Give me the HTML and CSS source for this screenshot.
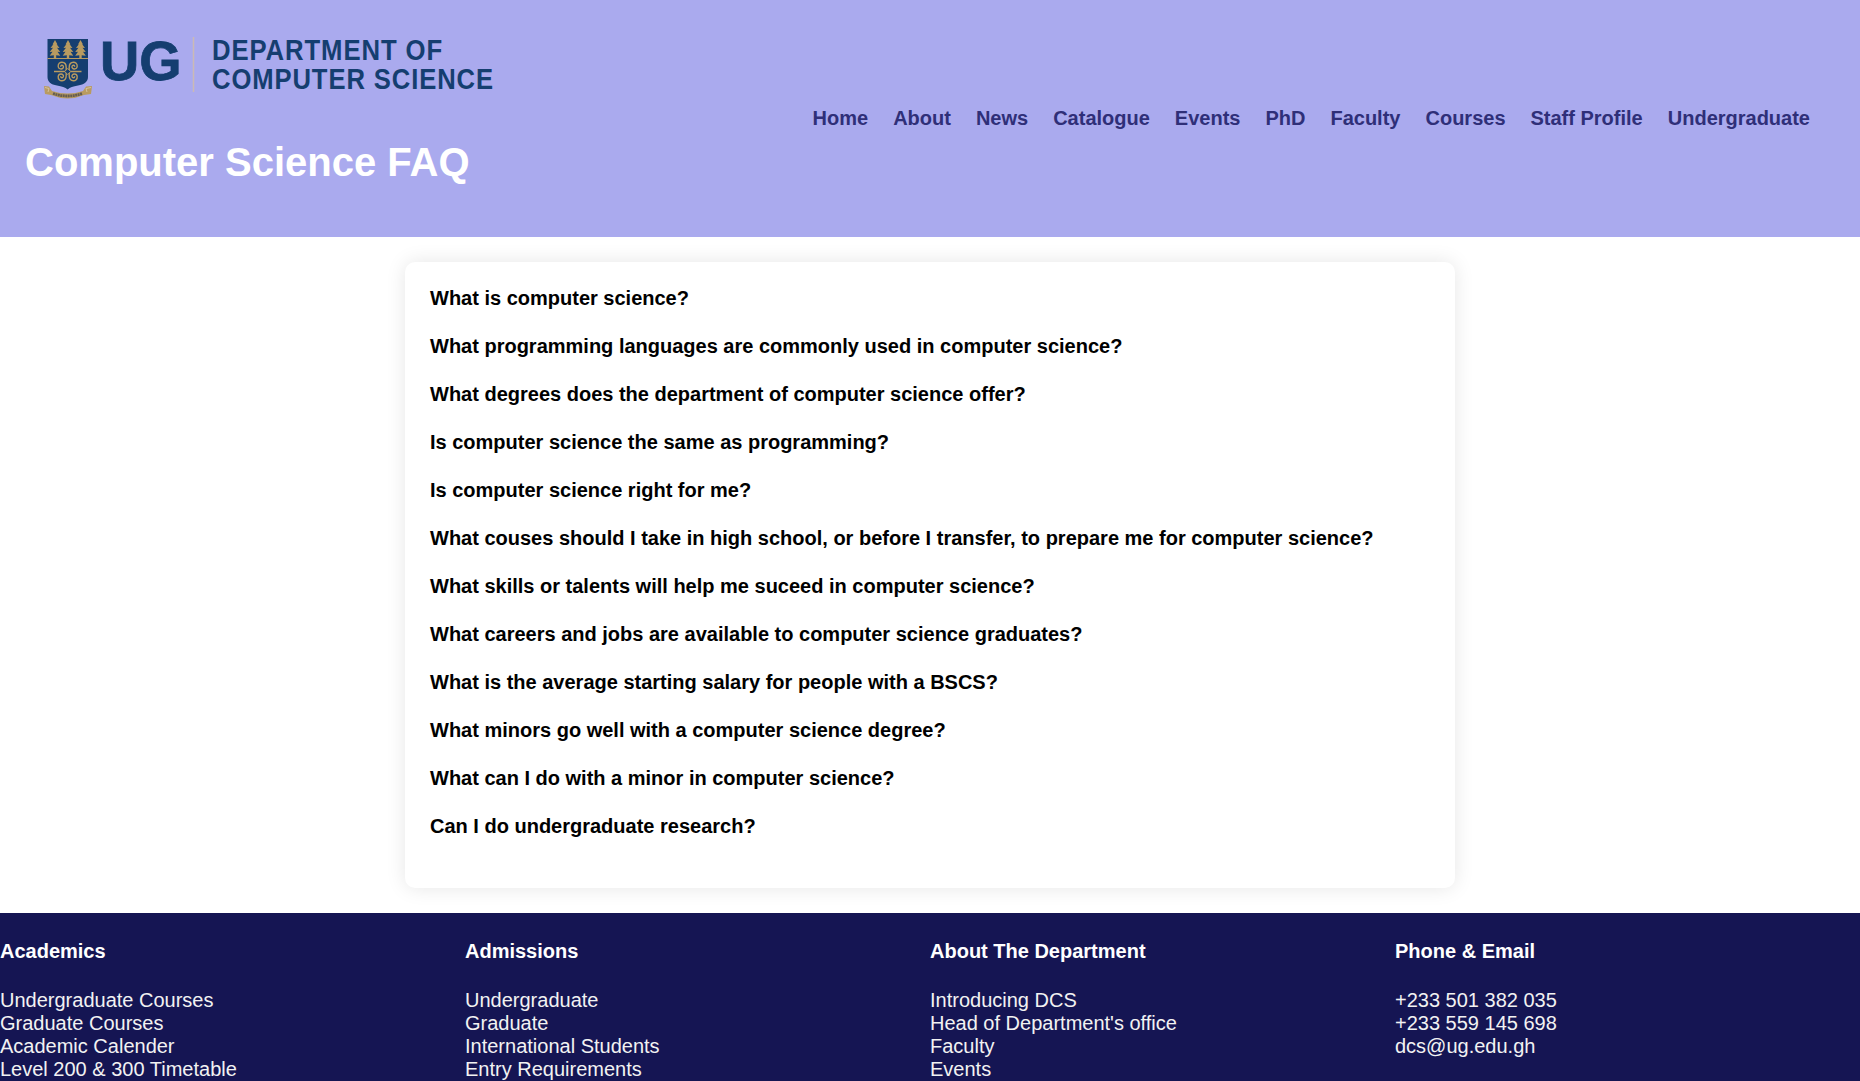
FILE: index.html
```html
<!DOCTYPE html>
<html lang="en">
<head>
<meta charset="utf-8">
<title>Computer Science FAQ</title>
<link rel="stylesheet" href="styles.css">
</head>
<body>
<header class="header">
  <div class="brand">
    <svg class="logo" width="520" height="80" viewBox="0 0 520 80" role="img" aria-label="UG Department of Computer Science">
      <defs>
        <g id="tree" fill="#b99b60">
          <path d="M0 0L2.500 4.500L1.600 4.300L4.500 8L2 7.800L5.300 12L2.500 11.700L5.300 15.700L1.200 15.200V18.500H-1.200V15.200L-5.300 15.700L-2.500 11.700L-5.300 12L-2 7.800L-4.500 8L-1.600 4.300L-2.500 4.500Z"/>
        </g>
        <g id="scroll" fill="none" stroke="#b99b60" stroke-width="1.400">
          <path d="M-1.500 -1V-4C-1.500 -11 -10 -10.500 -9.500 -5C-9 -1.500 -3.800 -2 -4.300 -5C-4.600 -7 -7.300 -6.500 -6.800 -4.700M-1.500 1V4C-1.500 11 -10 10.500 -9.500 5C-9 1.500 -3.800 2 -4.300 5C-4.600 7 -7.300 6.500 -6.800 4.700"/>
        </g>
      </defs>
      <path d="M47.500 12H88V50C88 55 84 57.500 78 58.500C73 59.500 70 60 67.700 62.500C65 60 62 59.500 57 58.500C51 57.500 47.500 55 47.500 50Z" fill="#153e70"/>
      <path d="M47.500 31.500H88" stroke="#b99b60" stroke-width="1"/>
      <use href="#tree" x="55" y="13"/><use href="#tree" x="68" y="13"/><use href="#tree" x="80.500" y="13"/>
      <use href="#scroll" x="67.700" y="44.500"/>
      <use href="#scroll" transform="translate(67.700 44.500) scale(-1 1)"/>
      <path d="M54 44.500H81.500" stroke="#b99b60" stroke-width="1.500"/>
      <path d="M67.700 41.500L70.700 44.500L67.700 47.500L64.700 44.500Z" fill="#153e70" stroke="#b99b60"/>
      <path d="M44 59L49 59.500L52 64Q67.700 69 83 64L86 59.500L92 59L91 67L84 68Q67.700 75 51 68L45 67Z" fill="#b99b60"/>
      <path d="M45 60.500L49 61.500L48 65M91 60.500L86 61.500L87 65" fill="none" stroke="#d5c29c"/>
      <path d="M53 66.500Q67.700 71.500 82.500 66.500" fill="none" stroke="#665d51" stroke-width="2.800" stroke-dasharray="2 .5"/>
      <text class="logo-ug" x="100" y="52.800" textLength="81.500" lengthAdjust="spacingAndGlyphs">UG</text>
      <path d="M193.500 10V65" stroke="#cbbab4" stroke-width="1.500"/>
      <text class="logo-name" x="212" y="32.800" textLength="231" lengthAdjust="spacingAndGlyphs">DEPARTMENT OF</text>
      <text class="logo-name" x="212" y="61.800" textLength="282" lengthAdjust="spacingAndGlyphs">COMPUTER SCIENCE</text>
    </svg>
    <h1 class="title">Computer Science FAQ</h1>
  </div>
  <nav class="nav">
    <a>Home</a><a>About</a><a>News</a><a>Catalogue</a><a>Events</a><a>PhD</a><a>Faculty</a><a>Courses</a><a>Staff Profile</a><a>Undergraduate</a>
  </nav>
</header>
<main class="faq">
  <p>What is computer science?</p>
  <p>What programming languages are commonly used in computer science?</p>
  <p>What degrees does the department of computer science offer?</p>
  <p>Is computer science the same as programming?</p>
  <p>Is computer science right for me?</p>
  <p>What couses should I take in high school, or before I transfer, to prepare me for computer science?</p>
  <p>What skills or talents will help me suceed in computer science?</p>
  <p>What careers and jobs are available to computer science graduates?</p>
  <p>What is the average starting salary for people with a BSCS?</p>
  <p>What minors go well with a computer science degree?</p>
  <p>What can I do with a minor in computer science?</p>
  <p>Can I do undergraduate research?</p>
</main>
<footer class="footer">
  <section><h4>Academics</h4><ul><li>Undergraduate Courses</li><li>Graduate Courses</li><li>Academic Calender</li><li>Level 200 &amp; 300 Timetable</li></ul></section>
  <section><h4>Admissions</h4><ul><li>Undergraduate</li><li>Graduate</li><li>International Students</li><li>Entry Requirements</li></ul></section>
  <section><h4>About The Department</h4><ul><li>Introducing DCS</li><li>Head of Department's office</li><li>Faculty</li><li>Events</li></ul></section>
  <section><h4>Phone &amp; Email</h4><ul><li>+233 501 382 035</li><li>+233 559 145 698</li><li>dcs@ug.edu.gh</li></ul></section>
</footer>
</body>
</html>
```
FILE: styles.css
```css
* { box-sizing: border-box; }
body {
  margin: 0;
  background: #fff;
  font: 20px/23px "Liberation Sans", Arial, sans-serif;
  color: #000;
}
.header {
  display: flex;
  justify-content: space-between;
  align-items: center;
  height: 237px;
  padding: 0 50px 0 0;
  background: #aaaaee;
}
.brand {
  align-self: flex-start;
  padding-top: 27px;
}
.logo {
  display: block;
  overflow: visible;
}
.logo-ug, .logo-name {
  font-weight: bold;
  fill: #153e70;
}
.logo-ug {
  font-size: 56px;
  stroke: #153e70;
  stroke-width: .8px;
}
.logo-name {
  font-size: 29px;
  letter-spacing: 1px;
}
.title {
  margin: 32px 0 0 25px;
  font-size: 40px;
  line-height: 46px;
  color: #fff;
}
.nav {
  display: flex;
  gap: 25px;
  font-weight: bold;
  color: #2f2f78;
}
.faq {
  width: 1050px;
  height: 626px;
  margin: 25px auto;
  padding: 25px;
  border-radius: 10px;
  background: #fff;
  box-shadow: 0 0 20px rgba(0, 0, 0, .1);
  font-weight: bold;
}
.faq p { margin: 0 0 25px; }
.footer {
  display: grid;
  grid-template-columns: repeat(4, 1fr);
  height: 168px;
  overflow: hidden;
  background: #151553;
  color: #fff;
}
.footer h4 { margin: 27px 0 26px; }
.footer ul {
  margin: 0;
  padding: 0;
  list-style: none;
  color: #f2f2f2;
}
```
